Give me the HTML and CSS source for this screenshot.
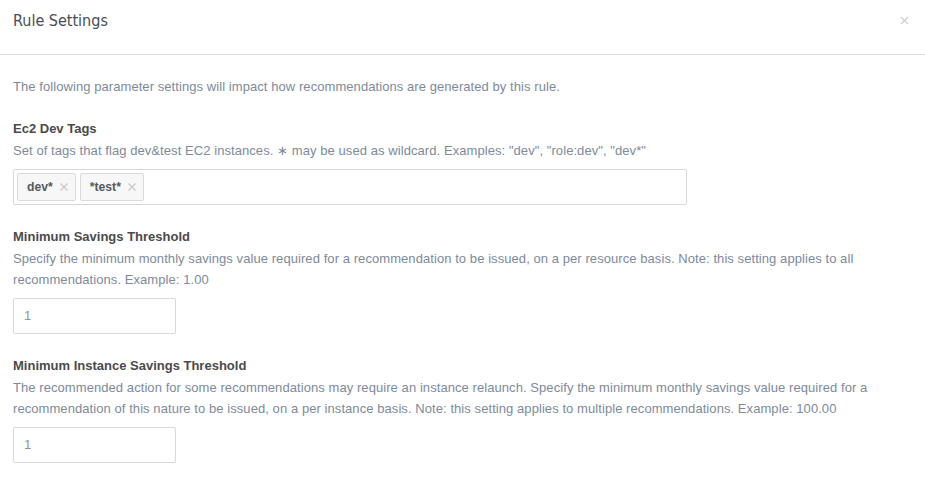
FILE: index.html
```html
<!DOCTYPE html>
<html>
<head>
<meta charset="utf-8">
<link rel="stylesheet" href="styles.css">
</head>
<body>
<div class="modal">
  <div class="modal-header">
    <h1 class="modal-title">Rule Settings</h1>
    <svg class="close" width="9" height="9" viewBox="0 0 9 9"><path d="M1 1L8 8M8 1L1 8" stroke="#d0d0d0" stroke-width="1.3" fill="none"/></svg>
  </div>
  <div class="modal-body">
    <p class="intro">The following parameter settings will impact how recommendations are generated by this rule.</p>

    <div class="setting">
      <div class="label">Ec2 Dev Tags</div>
      <div class="desc">Set of tags that flag dev&amp;test EC2 instances. &#8727; may be used as wildcard. Examples: "dev", "role:dev", "dev*"</div>
      <div class="tag-input">
        <span class="tag">dev*<svg class="tag-x" width="8" height="8" viewBox="0 0 8 8"><path d="M0.5 0.5L7.5 7.5M7.5 0.5L0.5 7.5" stroke="#c9c9c9" stroke-width="1.3" fill="none"/></svg></span>
        <span class="tag">*test*<svg class="tag-x" width="8" height="8" viewBox="0 0 8 8"><path d="M0.5 0.5L7.5 7.5M7.5 0.5L0.5 7.5" stroke="#c9c9c9" stroke-width="1.3" fill="none"/></svg></span>
      </div>
    </div>

    <div class="setting">
      <div class="label">Minimum Savings Threshold</div>
      <div class="desc">Specify the minimum monthly savings value required for a recommendation to be issued, on a per resource basis. Note: this setting applies to all recommendations. Example: 1.00</div>
      <div class="text-input">1</div>
    </div>

    <div class="setting">
      <div class="label">Minimum Instance Savings Threshold</div>
      <div class="desc">The recommended action for some recommendations may require an instance relaunch. Specify the minimum monthly savings value required for a recommendation of this nature to be issued, on a per instance basis. Note: this setting applies to multiple recommendations. Example: 100.00</div>
      <div class="text-input">1</div>
    </div>
  </div>
</div>
</body>
</html>
```

FILE: styles.css
```css
* { box-sizing: border-box; }
html, body {
  margin: 0;
  padding: 0;
  background: #ffffff;
}
body {
  font-family: "Liberation Sans", Arial, sans-serif;
  width: 925px;
  height: 486px;
  overflow: hidden;
}
.modal-header {
  display: flex;
  justify-content: space-between;
  align-items: flex-start;
  height: 55px;
  padding: 11px 16px 0 13px;
  border-bottom: 1px solid #dddddd;
}
.modal-title {
  margin: 0;
  font-family: "DejaVu Sans Condensed", "DejaVu Sans", sans-serif;
  font-stretch: condensed;
  font-weight: normal;
  font-size: 16px;
  line-height: 20px;
  color: #474d55;
}
.close {
  margin-top: 5px;
}
.modal-body {
  padding: 21px 13px 0 13px;
}
.intro {
  margin: 0 0 21px 0;
  font-size: 13px;
  letter-spacing: 0.07px;
  line-height: 21px;
  color: #7d8a9c;
}
.setting {
  margin-bottom: 21px;
}
.label {
  font-size: 13px;
  font-weight: bold;
  line-height: 21px;
  color: #4a4a4a;
  margin-bottom: 1px;
}
.desc {
  font-size: 13px;
  letter-spacing: 0.07px;
  line-height: 21px;
  color: #7d8a9c;
  margin-bottom: 8px;
}
.tag-input {
  display: flex;
  gap: 4px;
  width: 674px;
  height: 36px;
  margin-top: 1px;
  padding: 3px;
  border: 1px solid #d6d9de;
  border-radius: 2px;
}
.tag {
  display: inline-flex;
  align-items: center;
  height: 28px;
  padding: 0 7px 0 9px;
  border: 1px solid #dadada;
  border-radius: 2px;
  background: #f7f7f7;
  font-size: 12.2px;
  font-weight: bold;
  color: #555a61;
}
.tag-x {
  margin-left: 7px;
}
.text-input {
  width: 163px;
  height: 36px;
  padding: 0 10px;
  border: 1px solid #d6d9de;
  border-radius: 2px;
  font-size: 13px;
  line-height: 34px;
  color: #8a94a3;
}
```
